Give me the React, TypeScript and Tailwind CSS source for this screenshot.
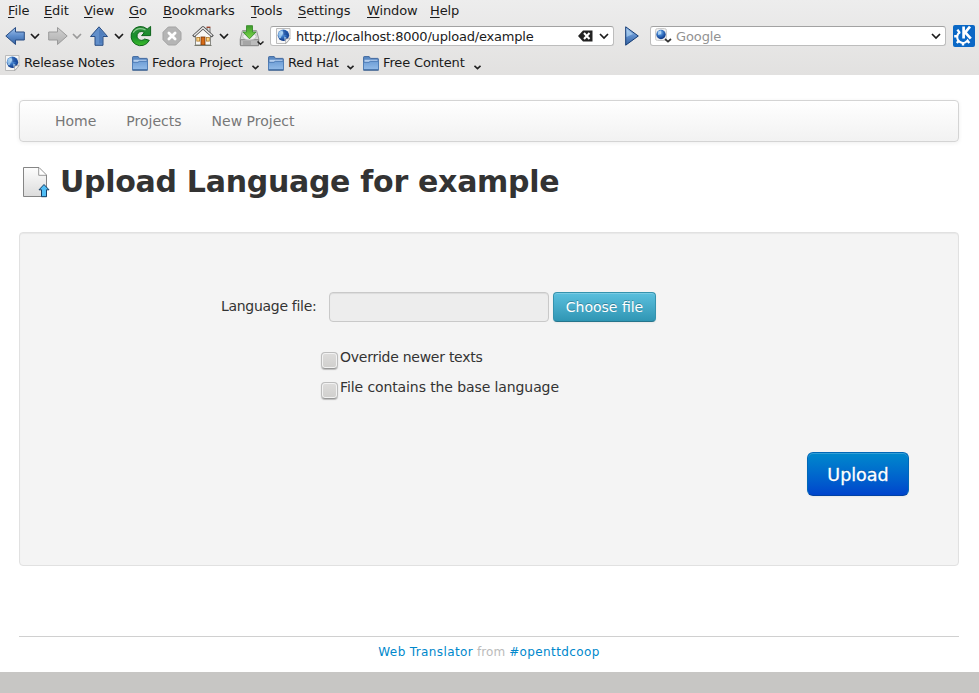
import type { ReactNode } from 'react';

const menus: { label: string; cls: string }[] = [
  { label: 'File', cls: 'w-9' },
  { label: 'Edit', cls: 'w-10' },
  { label: 'View', cls: 'w-[45px]' },
  { label: 'Go', cls: 'w-[34px]' },
  { label: 'Bookmarks', cls: 'w-[88px]' },
  { label: 'Tools', cls: 'w-[47px]' },
  { label: 'Settings', cls: 'w-[69px]' },
  { label: 'Window', cls: 'w-[63px]' },
  { label: 'Help', cls: 'w-10' },
];

function Chevron({ className = '', color = '#1b1b1b' }: { className?: string; color?: string }) {
  return (
    <svg className={`shrink-0 ${className}`} width="10" height="7" viewBox="0 0 10 7" fill="none" stroke={color} strokeWidth="1.7">
      <path d="M1 1 L5 5 L9 1" />
    </svg>
  );
}

function SmallChevron({ className = '' }: { className?: string }) {
  return (
    <svg className={`shrink-0 ${className}`} width="7" height="5" viewBox="0 0 7 5" fill="none" stroke="#222" strokeWidth="1.6">
      <path d="M.5 .8 L3.5 3.6 L6.5 .8" />
    </svg>
  );
}

function Gradients() {
  return (
    <svg width="0" height="0" className="absolute">
      <defs>
        <linearGradient id="blue" x1="0" y1="0" x2="0" y2="1">
          <stop offset="0" stopColor="#a3c4ec" />
          <stop offset=".5" stopColor="#5d8dcc" />
          <stop offset="1" stopColor="#35619f" />
        </linearGradient>
        <linearGradient id="grey" x1="0" y1="0" x2="0" y2="1">
          <stop offset="0" stopColor="#b0b0b0" />
          <stop offset="1" stopColor="#d0d0d0" />
        </linearGradient>
        <linearGradient id="green" x1="0" y1="0" x2="0" y2="1">
          <stop offset="0" stopColor="#2f8b3b" />
          <stop offset=".55" stopColor="#16902a" />
          <stop offset="1" stopColor="#3fbc2c" />
        </linearGradient>
        <linearGradient id="lime" x1="0" y1="0" x2="0" y2="1">
          <stop offset="0" stopColor="#3e9a2c" />
          <stop offset="1" stopColor="#7bd848" />
        </linearGradient>
        <linearGradient id="folder" x1="0" y1="0" x2="0" y2="1">
          <stop offset="0" stopColor="#6f9fd6" />
          <stop offset="1" stopColor="#93bbe8" />
        </linearGradient>
        <radialGradient id="globe" cx=".4" cy=".3" r=".7">
          <stop offset="0" stopColor="#a9d2f5" />
          <stop offset=".45" stopColor="#3979c8" />
          <stop offset="1" stopColor="#0c3483" />
        </radialGradient>
        <linearGradient id="paper" x1="0" y1="0" x2="0" y2="1">
          <stop offset="0" stopColor="#fdfdfd" />
          <stop offset="1" stopColor="#dcdcdc" />
        </linearGradient>
      </defs>
    </svg>
  );
}

function Arrow({ dir }: { dir: 'left' | 'right' | 'up' }) {
  const grey = dir === 'right';
  const turn = dir === 'right' ? 'rotate(180 10 10)' : dir === 'up' ? 'rotate(90 10 10)' : undefined;
  return (
    <svg className="shrink-0" width="20" height="20" viewBox="0 0 20 20">
      <path
        transform={turn}
        d="M.8 10 L10.5 1.5 V6 H19.3 V14 H10.5 V18.5 Z"
        fill={grey ? 'url(#grey)' : dir === 'up' ? '#628fca' : 'url(#blue)'}
        stroke={grey ? '#9a9a9a' : '#294d83'}
        strokeLinejoin="round"
      />
      {dir === 'up' && <path d="M10 2.5 L16.5 9.5 H13 V17.5 H10Z" fill="#3c6bad" opacity=".45" />}
    </svg>
  );
}

function GlobePage({ className = '' }: { className?: string }) {
  return (
    <svg className={`shrink-0 ${className}`} width="15" height="16" viewBox="0 0 15 16">
      <path d="M.5 .5 H14 V11 L10 15.5 H.5 Z" fill="#f6f6f6" stroke="#bbb" />
      <circle cx="7.4" cy="7.3" r="5.7" fill="url(#globe)" />
      <path d="M7 2 Q9.5 1.8 11.5 4 L12.2 7.5 L9 6.8 L7.5 7.5Z" fill="#12408f" opacity=".6" />
      <path d="M2.6 4.6 L5 2.6 L7 4 L6 7 L4.8 10.3 L3 10 Q1.4 7.7 2.6 4.6Z M8 8.5 L10.5 9.5 L8.5 12.4Z" fill="#b9ddf6" opacity=".7" />
      <path d="M14 10.5 L9.7 11 V15.5Z" fill="#fff" stroke="#999" strokeWidth=".7" />
    </svg>
  );
}

function Folder() {
  return (
    <svg className="shrink-0" width="16" height="15" viewBox="0 0 16 15">
      <path d="M.6 13.5 V1.2 Q.6 .6 1.2 .6 H6.2 L7.4 2.4 H14.8 Q15.3 2.4 15.3 3 V13.5Z" fill="#5b8ac4" stroke="#41699f" />
      <path d="M1.5 3.8 H14.5 V5 H7.3 L6.2 6 H1.5Z" fill="#b5cfee" />
      <path d="M.5 6.3 H6 L7.3 5.3 H15.5 V13.7 H.5Z" fill="url(#folder)" stroke="#4f7db6" strokeWidth=".9" />
      <path d="M.4 14.2 H15.6" stroke="#2f5487" />
    </svg>
  );
}

function Reload() {
  return (
    <svg className="shrink-0" width="22" height="22" viewBox="0 0 22 22">
      <path d="M19.3 15.3 A9.6 9.6 0 1 1 17.2 4.1 L20.6 1.4 V10.6 H11.6 L14.3 7.6 A4.4 4.4 0 1 0 14.6 14Z" fill="url(#green)" stroke="#0d641b" strokeLinejoin="round" />
      <path d="M3.2 7.6 Q7.5 1.2 15.5 4.9" fill="none" stroke="#8bcb90" strokeWidth="1.2" />
    </svg>
  );
}

function Stop() {
  return (
    <svg className="shrink-0" width="20" height="20" viewBox="0 0 20 20">
      <path d="M6.3 1 H13.7 L19 6.3 V13.7 L13.7 19 H6.3 L1 13.7 V6.3Z" fill="#b5b5b5" stroke="#a3a3a3" />
      <path d="M6.9 6.9 L13.1 13.1 M13.1 6.9 L6.9 13.1" stroke="#fff" strokeWidth="2.8" strokeLinecap="round" />
    </svg>
  );
}

function House() {
  return (
    <svg className="shrink-0" width="22" height="22" viewBox="0 0 22 22">
      <path d="M15 2.5 H18 V8 L15 6Z" fill="#ddd" stroke="#555" strokeWidth=".8" />
      <path d="M14.6 2.2 H18.4" stroke="#a33b20" strokeWidth="1.2" />
      <path d="M3.5 10 L11 3.5 L18.5 10 V20 H3.5Z" fill="#f8f7f4" stroke="#8b8b85" />
      <path d="M1.2 11.5 L11 2.6 L20.8 11.5" fill="none" stroke="#4c4c4c" strokeWidth="3" strokeLinejoin="round" />
      <path d="M2 10.8 L11 2.8 L20 10.8" fill="none" stroke="#e9e9e9" strokeWidth="1.5" />
      <rect x="9" y="12" width="4" height="8" fill="#d66b16" stroke="#753608" strokeWidth=".8" />
      <rect x="4.8" y="12.5" width="2.8" height="3.6" fill="#ffd885" stroke="#b37928" strokeWidth=".8" />
      <rect x="14.5" y="12.5" width="2.8" height="3.6" fill="#ffd885" stroke="#b37928" strokeWidth=".8" />
      <path d="M2.5 20.5 H19.5" stroke="#77796d" />
    </svg>
  );
}

function Download() {
  return (
    <svg className="shrink-0" width="26" height="24" viewBox="0 0 26 24">
      <path d="M3.5 6.5 H17.5 L19.8 15 V21 H1.2 V15Z" fill="#dadada" stroke="#999" />
      <path d="M1.5 15.7 H19.5 V21.7 H1.5Z" fill="#bcbcbc" stroke="#858585" />
      <ellipse cx="10.5" cy="12.5" rx="6.8" ry="3.5" fill="#f0f0f0" stroke="#b5b5b5" strokeWidth=".7" />
      <path d="M4 18 H12 M4 20 H12" stroke="#858585" strokeWidth=".8" />
      <path d="M7.5 1.7 H13.5 V8 H17 L10.5 14.8 L4 8 H7.5Z" fill="url(#lime)" stroke="#429236" />
      <path d="M18.5 17.5 L21.5 20.3 L24.5 17.5" fill="none" stroke="#222" strokeWidth="1.5" />
    </svg>
  );
}

function Kde() {
  return (
    <svg className="shrink-0" width="22" height="22" viewBox="0 0 22 22">
      <rect width="22" height="22" rx="2" fill="#0a68c6" />
      <path d="M7.2 7 A5.8 5.8 0 1 0 15.6 13.6" fill="none" stroke="#fff" strokeWidth="2" />
      <path d="M6.6 7.6 L4.4 4.6 M4.6 11.2 H1.2 M6 15.6 L3.8 18 M10 17 V20.6 M14.2 15.6 L16.4 18" stroke="#fff" strokeWidth="2.4" />
      <path d="M10.6 1 V14.4 M17.4 1 L12 7.6 L18.2 14.4" fill="none" stroke="#0a68c6" strokeWidth="4.6" />
      <path d="M10.6 1.6 V13.6 M17 1.6 L12.2 7.4 L17.8 13.6" fill="none" stroke="#fff" strokeWidth="2.7" />
    </svg>
  );
}

function Bookmark({ icon, label, text, children }: { icon: ReactNode; label: string; text: string; children?: ReactNode }) {
  return (
    <div className="flex h-4 items-center">
      {icon}
      <span className={`ml-1 whitespace-nowrap tracking-[-0.15px] ${text}`}>{label}</span>
      {children}
    </div>
  );
}

function Toolbars() {
  return (
    <header className="h-[75px] bg-linear-to-b from-[#ededed] to-[#e2e1e0] text-[13px] leading-4 text-[#1b1b1b]">
      <div className="flex h-[22px] pt-[3px] pl-2">
        {menus.map(({ label, cls }) => (
          <div key={label} className={`shrink-0 whitespace-nowrap tracking-[-0.12px] ${cls}`}>
            <span className="underline decoration-1 underline-offset-2">{label[0]}</span>
            {label.slice(1)}
          </div>
        ))}
      </div>
      <div className="flex h-7 items-center pl-[5px]">
        <Arrow dir="left" />
        <Chevron className="ml-[5px]" />
        <span className="ml-2 flex"><Arrow dir="right" /></span>
        <Chevron className="ml-1" color="#9a9a9a" />
        <span className="ml-[7px] flex"><Arrow dir="up" /></span>
        <Chevron className="ml-[5px]" />
        <span className="ml-1.5 flex"><Reload /></span>
        <span className="ml-2.5 flex"><Stop /></span>
        <span className="ml-[10px] flex"><House /></span>
        <Chevron className="ml-[5px]" />
        <span className="ml-2.5 flex"><Download /></span>
        <div className="ml-[5px] flex h-5 w-[344px] shrink-0 items-center rounded-[3px] border border-[#bdbdbd] border-t-[#a2a2a2] bg-white">
          <GlobePage className="ml-[5px]" />
          <span className="ml-[5px] w-[282px] pt-0.5 whitespace-nowrap tracking-[-0.2px]">http://localhost:8000/upload/example</span>
          <svg className="shrink-0" width="15" height="12" viewBox="0 0 15 12">
            <path d="M0 6 L5 .5 H14.5 V11.5 H5Z" fill="#222" />
            <path d="M6 3 L11.5 9 M11.5 3 L6 9" stroke="#fff" strokeWidth="2" />
          </svg>
          <Chevron className="ml-1.5" />
        </div>
        <svg className="ml-[11px] shrink-0" width="14" height="20" viewBox="0 0 14 20">
          <path d="M.7 .8 L13.3 10 L.7 19.2Z" fill="url(#blue)" stroke="#143c75" />
          <path d="M1.5 3 L8 8 L1.5 11Z" fill="#b9dcf5" opacity=".6" />
        </svg>
        <div className="ml-[11px] flex h-5 w-[296px] shrink-0 items-center rounded-[3px] border border-[#bdbdbd] border-t-[#a2a2a2] bg-white">
          <svg className="ml-1 shrink-0" width="18" height="16" viewBox="0 0 18 16">
            <rect x=".5" y=".5" width="11" height="12" rx="2" fill="#eee" stroke="#ccc" />
            <circle cx="6" cy="6.5" r="4.7" fill="url(#globe)" />
            <path d="M3 3.5 L6 2.5 L6 6 L3 7Z" fill="#b7daf6" opacity=".8" />
            <path d="M10 11 L13 13.7 L16 11" fill="none" stroke="#333" strokeWidth="1.7" />
          </svg>
          <span className="ml-[3px] w-64 pt-0.5 tracking-[-0.1px] text-[#929292]">Google</span>
          <Chevron className="-ml-px" />
        </div>
        <span className="ml-[7px] flex"><Kde /></span>
      </div>
      <div className="flex h-[25px] pt-[5px] pl-[5px]">
        <Bookmark icon={<GlobePage />} label="Release Notes" text="w-[108px]" />
        <Bookmark icon={<Folder />} label="Fedora Project" text="w-[100px]">
          <SmallChevron className="mt-2" />
        </Bookmark>
        <span className="w-[9px]" />
        <Bookmark icon={<Folder />} label="Red Hat" text="w-[59px]">
          <SmallChevron className="mt-2" />
        </Bookmark>
        <span className="w-[9px]" />
        <Bookmark icon={<Folder />} label="Free Content" text="w-[91px]">
          <SmallChevron className="mt-2" />
        </Bookmark>
      </div>
    </header>
  );
}

function CheckRow({ label, tracking }: { label: string; tracking: string }) {
  return (
    <label className="flex h-[30px] items-start">
      <span className="mt-[5px] size-[17px] shrink-0 rounded-[4px] border border-[#bcbcbc] border-b-[#979797] bg-linear-to-b from-[#dddcdb] to-[#d0cfcd] shadow-[inset_0_0_0_1px_#f2f2f2,0_1px_1px_#bbb]" />
      <span className={`ml-0.5 whitespace-nowrap leading-5 ${tracking}`}>{label}</span>
    </label>
  );
}

export default function App() {
  return (
    <div className="h-[693px] w-[979px] overflow-hidden bg-[#c7c6c4] font-['DejaVu_Sans',sans-serif]">
      <Gradients />
      <Toolbars />
      <main className="h-[597px] bg-white pt-[25px] pr-5 pl-[19px] text-[14px] text-[#333]">
        <nav className="flex h-[42px] items-center gap-[30px] rounded-[4px] border border-[#d4d4d4] bg-linear-to-b from-white to-[#f2f2f2] pl-[35px] text-[#777] shadow-[0_1px_4px_rgba(0,0,0,0.065)]">
          <a>Home</a>
          <a>Projects</a>
          <a>New Project</a>
        </nav>
        <div className="flex h-[90px] items-start pt-[22px] pl-1">
          <svg className="mt-[3px] shrink-0" width="27" height="31" viewBox="0 0 27 31">
            <path d="M.5 .5 H16 L23.5 8 V29.5 H.5Z" fill="url(#paper)" stroke="#858585" />
            <path d="M15.7 1 V8.3 H23" fill="#fff" stroke="#999" />
            <path d="M21 17.5 L26 22.8 H23.5 V29.7 H18.5 V22.8 H16Z" fill="#50bdf5" stroke="#173f66" strokeLinejoin="round" />
          </svg>
          <h1 className="ml-[10px] whitespace-nowrap text-[30px] leading-9 font-bold tracking-[-0.29px]">Upload Language for example</h1>
        </div>
        <section className="h-[334px] rounded-[4px] border border-[#e1e1e1] bg-[#f4f4f4] pt-[59px] shadow-[inset_0_1px_1px_rgba(0,0,0,0.05)]">
          <div className="flex h-[30px] pl-[201px]">
            <label className="w-[108px] pt-[4px] whitespace-nowrap leading-5 tracking-[-0.3px]">Language file:</label>
            <div className="w-[220px] rounded-[4px] border border-[#c9c9c9] bg-[#ededed] shadow-[inset_0_1px_1px_rgba(0,0,0,0.075)]" />
            <button className="ml-1 w-[103px] rounded-[4px] border border-[#3593ae] border-b-[#26758c] bg-linear-to-b from-[#5bc0de] to-[#2f96b4] whitespace-nowrap text-white [text-shadow:0_-1px_0_rgba(0,0,0,0.25)] shadow-[inset_0_1px_0_rgba(255,255,255,0.2),0_1px_2px_rgba(0,0,0,0.05)]">Choose file</button>
          </div>
          <div className="pt-[25px] pl-[301px]">
            <CheckRow label="Override newer texts" tracking="tracking-[-0.26px]" />
            <CheckRow label="File contains the base language" tracking="tracking-[-0.1px]" />
          </div>
          <div className="flex justify-end pt-[45px] pr-[49px]">
            <button className="h-11 w-[102px] rounded-[6px] border border-[#0068b8] border-b-[#0042a4] bg-linear-to-b from-[#0088cc] to-[#0044cc] pt-0.5 text-[17.5px] text-white [-webkit-text-stroke:0.3px_white] [text-shadow:0_-1px_0_rgba(0,0,0,0.25)] shadow-[inset_0_1px_0_rgba(255,255,255,0.2),0_1px_2px_rgba(0,0,0,0.05)]">Upload</button>
          </div>
        </section>
        <footer className="mt-[70px] flex justify-center border-t border-[#d0d0d0] pt-[6px] text-[12px] leading-[18px] tracking-[0.38px] whitespace-pre text-[#bbb]">
          <a className="text-[#0088cc]">Web Translator</a>
          <span className="tracking-[0.1px]"> from </span>
          <a className="text-[#0088cc]">#openttdcoop</a>
        </footer>
      </main>
    </div>
  );
}
